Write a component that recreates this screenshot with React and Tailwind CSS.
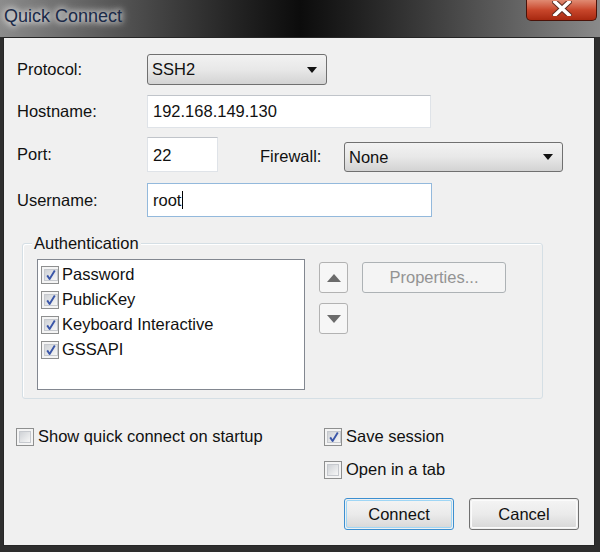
import React from "react";

const font = { fontFamily: '"Liberation Sans", Arial, sans-serif' };

function CheckBox({ checked }) {
  return (
    <span className="w-[18px] h-[18px] shrink-0 border border-[#8e8f8f] bg-[#f4f4f4] p-[2px] flex">
      <span className="flex-1 border border-[#c6c9ce] bg-gradient-to-br from-[#cfd2d6] to-[#f7f7f7] flex items-center justify-center">
        {checked && (
          <svg width="12" height="12" viewBox="0 0 12 12">
            <path d="M2.2 6.4 L4.6 10 L9.8 1.6" fill="none" stroke="#3a56a8" strokeWidth="1.9" strokeLinejoin="round" />
          </svg>
        )}
      </span>
    </span>
  );
}

function Combo({ value, className }) {
  return (
    <div className={"flex items-center justify-between rounded-[3px] border border-[#707070] bg-gradient-to-b from-[#f2f2f2] via-[#e8e8e8] to-[#d3d3d3] pl-[4px] pr-[9px] text-[#111] " + className}>
      <span>{value}</span>
      <svg width="10" height="6" viewBox="0 0 10 6">
        <path d="M0 0 H10 L5 6 Z" fill="#111" />
      </svg>
    </div>
  );
}

function Field({ value, className, focused, caret }) {
  return (
    <div
      className={
        "flex items-center bg-white pl-[5px] text-[#111] border " +
        (focused ? "border-[#93b9dc]" : "border-[#dfe3e8] border-t-[#c0c4ca]") +
        " " +
        className
      }
    >
      <span>{value}</span>
      {caret && <span className="w-[1px] h-[18px] bg-black ml-[1px]" />}
    </div>
  );
}

function Arrow({ up }) {
  return (
    <div className="w-[29px] h-[31px] rounded-[3px] border border-[#b2b2b2] bg-[#f6f6f6] flex items-center justify-center">
      <svg width="14" height="8" viewBox="0 0 14 8">
        {up ? <path d="M0 8 L7 0 L14 8 Z" fill="#6b6b6b" /> : <path d="M0 0 L14 0 L7 8 Z" fill="#6b6b6b" />}
      </svg>
    </div>
  );
}

function Button({ label, isDefault }) {
  return (
    <div
      className={
        "w-[110px] h-[32px] rounded-[3px] border flex p-[1px] " +
        (isDefault ? "border-[#3c8fd0]" : "border-[#707070]")
      }
    >
      <div
        className={
          "flex-1 rounded-[2px] flex items-center justify-center text-[#111] bg-gradient-to-b from-[#f3f3f3] via-[#ebebeb] to-[#d9d9d9] " +
          (isDefault ? "border border-[#9fd6f5]" : "border border-[#fbfbfb]")
        }
      >
        {label}
      </div>
    </div>
  );
}

export default function App() {
  const items = ["Password", "PublicKey", "Keyboard Interactive", "GSSAPI"];
  return (
    <div style={font} className="w-[600px] h-[552px] flex flex-col bg-[#2e2e2e] text-[16.5px] overflow-hidden">
      {/* Title bar */}
      <div className="h-[37px] shrink-0 flex items-start justify-between bg-gradient-to-r from-[#8c8c8c] via-[#0c0c0c] to-[#8a8a8a]">
        <div className="pl-[4px] pt-[3px] text-[18px] leading-[26px] text-[#1b2a48] [text-shadow:0_0_6px_#ffffff,0_0_10px_#ffffff]">
          Quick Connect
        </div>
        <div className="mr-[3px] w-[71px] h-[21px] rounded-b-[5px] border border-t-0 border-[#4a1208] bg-gradient-to-b from-[#e08a72] via-[#c8462b] to-[#a8280f] flex items-start justify-center pt-[1px]">
          <svg width="20" height="15" viewBox="0 0 20 15">
            <path d="M3 1 L17 14 M17 1 L3 14" stroke="#5a2a20" strokeWidth="5.5" strokeLinecap="square" />
            <path d="M3 1 L17 14 M17 1 L3 14" stroke="#ffffff" strokeWidth="3.6" strokeLinecap="square" />
          </svg>
        </div>
      </div>

      {/* Client area */}
      <div className="flex-1 ml-[3px] mr-[5px] mb-[6px] border border-[#262626] bg-[#f0f0f0] flex flex-col text-[#111]">
        <div className="flex flex-col pl-[13px]">
          <div className="flex items-center mt-[16px] h-[31px]">
            <span className="w-[130px]">Protocol:</span>
            <Combo value="SSH2" className="w-[180px] h-[31px]" />
          </div>
          <div className="flex items-center mt-[10px] h-[33px]">
            <span className="w-[130px]">Hostname:</span>
            <Field value="192.168.149.130" className="w-[284px] h-[33px]" />
          </div>
          <div className="flex items-end mt-[9px] h-[35px]">
            <span className="w-[130px] self-center">Port:</span>
            <Field value="22" className="w-[71px] h-[35px] !items-start pt-[5px]" />
            <span className="ml-[42px] w-[84px] self-center pt-[3px]">Firewall:</span>
            <Combo value="None" className="w-[219px] h-[30px]" />
          </div>
          <div className="flex items-center mt-[11px] h-[34px]">
            <span className="w-[130px]">Username:</span>
            <Field value="root" caret focused className="w-[285px] h-[34px]" />
          </div>
        </div>

        {/* Authentication group */}
        <div className="relative ml-[18px] mt-[26px] w-[521px] h-[156px] rounded-[3px] border border-[#d5dfe5] shadow-[inset_1px_1px_0_#ffffff] flex items-start pl-[14px] pt-[15px]">
          <span className="absolute left-[9px] -top-[11px] px-[2px] bg-[#f0f0f0] leading-[20px]">Authentication</span>
          <div className="w-[268px] h-[131px] border border-[#828790] bg-white flex flex-col pl-[3px] pt-[2px]">
            {items.map((t) => (
              <div key={t} className="h-[25px] flex items-center gap-[3px]">
                <CheckBox checked />
                <span>{t}</span>
              </div>
            ))}
          </div>
          <div className="ml-[14px] mt-[3px] flex flex-col gap-[10px]">
            <Arrow up />
            <Arrow />
          </div>
          <div className="ml-[14px] mt-[3px] w-[144px] h-[31px] rounded-[3px] border border-[#adb2b5] bg-[#f4f4f4] flex items-center justify-center text-[#939393]">
            Properties...
          </div>
        </div>

        {/* Options */}
        <div className="flex mt-[28px]">
          <div className="w-[320px] pl-[12px] flex items-center gap-[4px] h-[19px]">
            <CheckBox />
            <span>Show quick connect on startup</span>
          </div>
          <div className="flex flex-col gap-[14px]">
            <div className="flex items-center gap-[4px] h-[19px]">
              <CheckBox checked />
              <span>Save session</span>
            </div>
            <div className="flex items-center gap-[4px] h-[19px]">
              <CheckBox />
              <span>Open in a tab</span>
            </div>
          </div>
        </div>

        <div className="flex justify-end gap-[15px] pr-[15px] mt-[19px]">
          <Button label="Connect" isDefault />
          <Button label="Cancel" />
        </div>
      </div>
    </div>
  );
}
